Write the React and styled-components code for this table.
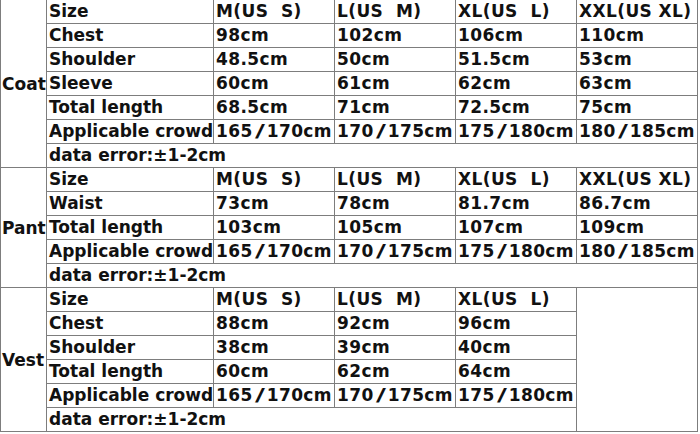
import React from 'react';
import styled, { createGlobalStyle } from 'styled-components';

const GlobalStyle = createGlobalStyle`
  html, body {
    margin: 0;
    padding: 0;
    background: #ffffff;
  }
`

const sections = [
  {
    name: 'Coat',
    head: ['Size', 'M(US  S)', 'L(US  M)', 'XL(US  L)', 'XXL(US XL)'],
    rows: [
      ['Chest', '98cm', '102cm', '106cm', '110cm'],
      ['Shoulder', '48.5cm', '50cm', '51.5cm', '53cm'],
      ['Sleeve', '60cm', '61cm', '62cm', '63cm'],
      ['Total length', '68.5cm', '71cm', '72.5cm', '75cm'],
      ['Applicable crowd', '165/170cm', '170/175cm', '175/180cm', '180/185cm'],
    ],
  },
  {
    name: 'Pant',
    head: ['Size', 'M(US  S)', 'L(US  M)', 'XL(US  L)', 'XXL(US XL)'],
    rows: [
      ['Waist', '73cm', '78cm', '81.7cm', '86.7cm'],
      ['Total length', '103cm', '105cm', '107cm', '109cm'],
      ['Applicable crowd', '165/170cm', '170/175cm', '175/180cm', '180/185cm'],
    ],
  },
  {
    name: 'Vest',
    head: ['Size', 'M(US  S)', 'L(US  M)', 'XL(US  L)'],
    rows: [
      ['Chest', '88cm', '92cm', '96cm'],
      ['Shoulder', '38cm', '39cm', '40cm'],
      ['Total length', '60cm', '62cm', '64cm'],
      ['Applicable crowd', '165/170cm', '170/175cm', '175/180cm'],
    ],
  },
]

function withSlash(text) {
  const parts = text.split('/')
  if (parts.length === 1) return text
  return (
    <>
      {parts[0]}
      <Slash>/</Slash>
      {parts[1]}
    </>
  )
}

function SizeChart() {
  return (
    <Table>
      <colgroup>
        <Col $w={46} />
        <Col $w={167} />
        <Col $w={121} />
        <Col $w={121} />
        <Col $w={121} />
        <Col $w={121} />
      </colgroup>
      {sections.map((s) => {
        const span = s.rows.length + 2
        const short = s.head.length < 5
        return (
          <tbody key={s.name}>
            <tr>
              <Section rowSpan={span}>{s.name}</Section>
              {s.head.map((h, i) => (
                <Cell key={i} $num={i > 0}>{h}</Cell>
              ))}
              {short && <Cell rowSpan={span} />}
            </tr>
            {s.rows.map((r) => (
              <tr key={r[0]}>
                {r.map((v, i) => (
                  <Cell key={i} $num={i > 0}>{withSlash(v)}</Cell>
                ))}
              </tr>
            ))}
            <tr>
              <Cell colSpan={short ? 4 : 5}>data error:±1-2cm</Cell>
            </tr>
          </tbody>
        )
      })}
    </Table>
  )
}

export default function App() {
  return (
    <>
      <GlobalStyle />
      <Page>
        <SizeChart />
      </Page>
    </>
  )
}

const Page = styled.div`
  width: 700px;
  height: 434px;
  overflow: hidden;
  background: #ffffff;
`

const Table = styled.table`
  border-collapse: collapse;
  table-layout: fixed;
  width: 697px;
  margin-top: -1px;
  font-family: 'DejaVu Sans', Verdana, sans-serif;
  font-weight: bold;
  font-size: 17px;
  color: #111111;
`

const Col = styled.col`
  width: ${(p) => p.$w}px;
`

const Cell = styled.td`
  border: 1px solid #7d7d7d;
  height: 23px;
  padding: 0 0 0 2px;
  line-height: 23px;
  white-space: pre;
  overflow: visible;
  text-align: left;
  vertical-align: middle;
  letter-spacing: ${(p) => (p.$num ? '0.4px' : '0')};
`

const Section = styled.td`
  border: 1px solid #7d7d7d;
  padding: 0 0 0 1px;
  white-space: nowrap;
  vertical-align: middle;
  text-align: left;
  overflow: visible;
`

const Slash = styled.span`
  display: inline-block;
  width: 14px;
  text-align: center;
  transform: scaleX(1.6);
  letter-spacing: 0;
`
